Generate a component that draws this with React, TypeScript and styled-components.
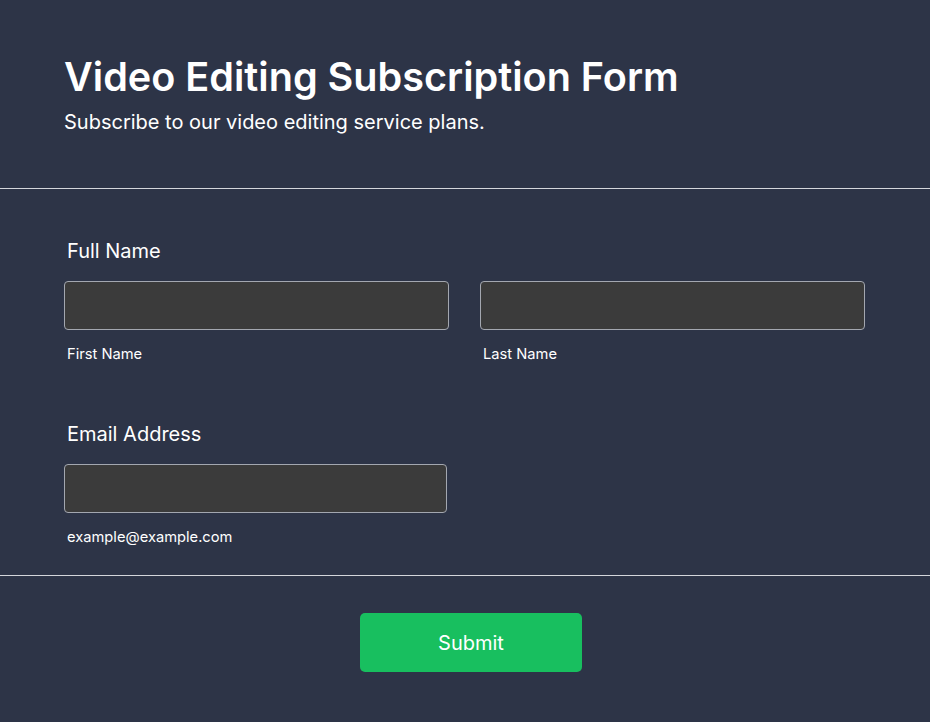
import React, {FC} from 'react';
import styled, {createGlobalStyle} from "styled-components";

const GlobalStyle = createGlobalStyle`
  html, body {
    margin: 0;
    padding: 0;
    background: #2d3447;
  }
  * {
    box-sizing: border-box;
  }
`

const Page = styled.div`
  min-height: 722px;
  background: #2d3447;
  color: #ffffff;
  font-family: Inter, "Noto Sans", sans-serif;
`

const Header = styled.header`
  padding: 54px 64px 54px;
  border-bottom: 1px solid #d4d6db;
`

const Title = styled.h1`
  margin: 0;
  font-size: 39.6px;
  font-weight: 600;
  line-height: 47px;
`

const Subtitle = styled.p`
  margin: 9px 0 0;
  font-size: 20px;
  line-height: 24px;
`

const Body = styled.div`
  padding: 50px 64px 29px;
  display: flex;
  flex-direction: column;
  gap: 59px;
  border-bottom: 1px solid #d4d6db;
`

const Field = styled.div`
  display: flex;
  flex-direction: column;
`

const Label = styled.label`
  padding-left: 3px;
  font-size: 20px;
  line-height: 24px;
  margin-bottom: 18px;
`

const Row = styled.div`
  display: grid;
  grid-template-columns: 385px 385px;
  gap: 31px;
`

const Group = styled.div<{ $width?: number }>`
  display: flex;
  flex-direction: column;
  width: ${p => p.$width ? `${p.$width}px` : 'auto'};
`

const Input = styled.input`
  height: 49px;
  width: 100%;
  background: #3b3b3b;
  border: 1px solid #a3a7b0;
  border-radius: 4px;
  color: #fff;
  font-family: inherit;
  font-size: 16px;
  padding: 0 12px;
  outline: none;
`

const Hint = styled.span`
  padding-left: 3px;
  margin-top: 15px;
  font-size: 14.7px;
  line-height: 18px;
`

const Footer = styled.div`
  display: flex;
  justify-content: center;
  padding: 37px 0 0 12px;
`

const SubmitButton = styled.button`
  width: 222px;
  height: 59px;
  border: none;
  border-radius: 5px;
  background: #18bf5f;
  color: #ffffff;
  font-family: inherit;
  font-size: 20px;
  cursor: pointer;
`

const App: FC = () => {
    return (
        <Page>
            <GlobalStyle/>
            <Header>
                <Title>Video Editing Subscription Form</Title>
                <Subtitle>Subscribe to our video editing service plans.</Subtitle>
            </Header>
            <Body>
                <Field>
                    <Label>Full Name</Label>
                    <Row>
                        <Group>
                            <Input type="text"/>
                            <Hint>First Name</Hint>
                        </Group>
                        <Group>
                            <Input type="text"/>
                            <Hint>Last Name</Hint>
                        </Group>
                    </Row>
                </Field>
                <Field>
                    <Label>Email Address</Label>
                    <Group $width={383}>
                        <Input type="email"/>
                        <Hint>example@example.com</Hint>
                    </Group>
                </Field>
            </Body>
            <Footer>
                <SubmitButton type="submit">Submit</SubmitButton>
            </Footer>
        </Page>
    );
};

export default App;
